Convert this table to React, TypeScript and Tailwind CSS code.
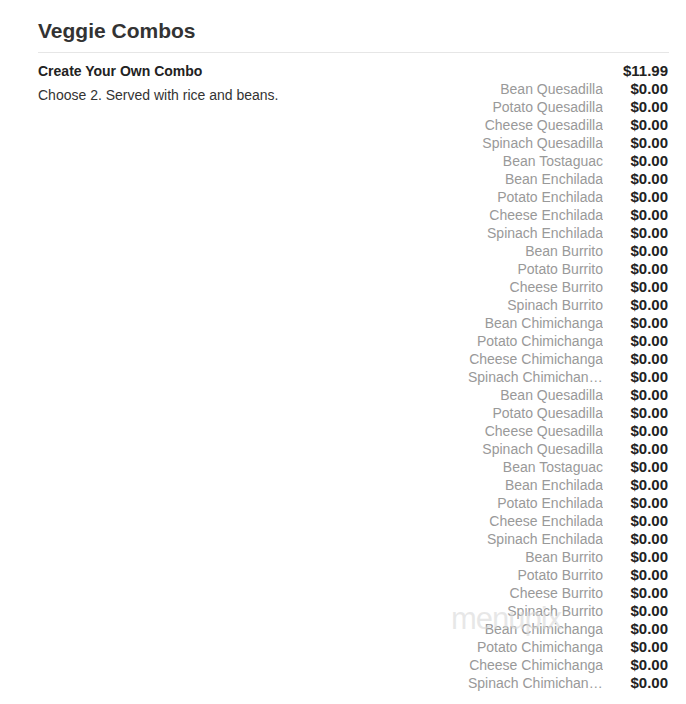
const options = [
  'Bean Quesadilla',
  'Potato Quesadilla',
  'Cheese Quesadilla',
  'Spinach Quesadilla',
  'Bean Tostaguac',
  'Bean Enchilada',
  'Potato Enchilada',
  'Cheese Enchilada',
  'Spinach Enchilada',
  'Bean Burrito',
  'Potato Burrito',
  'Cheese Burrito',
  'Spinach Burrito',
  'Bean Chimichanga',
  'Potato Chimichanga',
  'Cheese Chimichanga',
  'Spinach Chimichanga',
];

// list repeats twice in the menu data
const rows = [...options, ...options];

export default function App() {
  return (
    <div className="relative w-[686px] h-[704px] bg-white overflow-hidden font-['Liberation_Sans',Arial,sans-serif]">
      <div className="pl-[38px] pr-[17px] pt-[19px]">
        <h1 className="text-[21px] leading-[24px] font-bold text-[#333]">Veggie Combos</h1>
        <div className="mt-[9px] border-b border-[#e6e6e6]" />

        <div className="mt-[9px]">
          <div className="flex justify-between items-center h-[18px]">
            <span className="text-[14px] font-bold text-[#222]">Create Your Own Combo</span>
            <span className="text-[15px] font-bold text-[#222] pr-px">$11.99</span>
          </div>
          <div className="flex justify-between">
            <p className="mt-[6px] text-[14px] leading-[18px] text-[#333]">
              Choose 2. Served with rice and beans.
            </p>
            <ul className="flex flex-col">
              {rows.map((name, i) => (
                <li key={i} className="flex items-center h-[18px]">
                  <span className="block w-[135px] truncate text-right text-[14px] leading-[18px] text-[#999]">
                    {name}
                  </span>
                  <span className="w-[66px] text-right text-[15px] font-bold text-[#222] pr-px">$0.00</span>
                </li>
              ))}
            </ul>
          </div>
        </div>
      </div>

      <span className="pointer-events-none absolute left-[451px] top-[601px] text-[31px] leading-[36px] font-light tracking-[-1px] text-[#d8d8d8]/60 select-none">
        menupix
      </span>
    </div>
  );
}
